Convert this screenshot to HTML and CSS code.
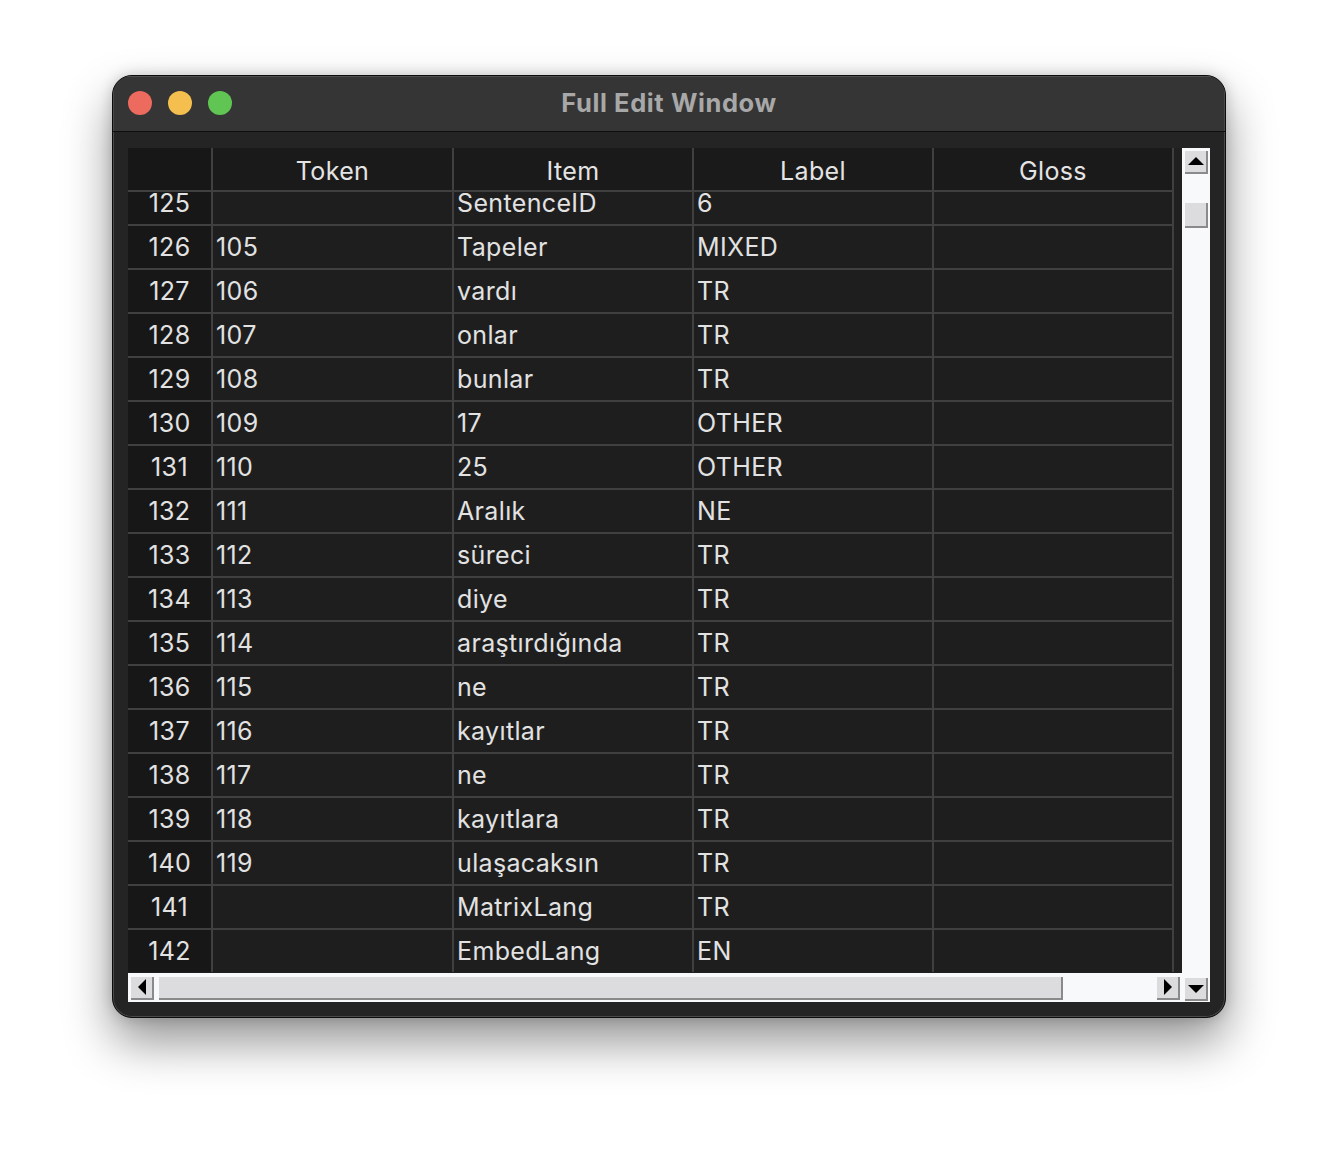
FILE: index.html
```html
<!DOCTYPE html>
<html>
<head>
<meta charset="utf-8">
<link rel="stylesheet" href="styles.css">
</head>
<body>
<div class="window">
  <div class="titlebar">
    <div class="lights">
      <span class="light red"></span>
      <span class="light yellow"></span>
      <span class="light green"></span>
    </div>
    <div class="title">Full Edit Window</div>
  </div>
  <div class="content">
    <div class="tablewrap">
      <div class="grid">
        <div class="h corner"></div>
        <div class="h">Token</div>
        <div class="h">Item</div>
        <div class="h">Label</div>
        <div class="h">Gloss</div>

        <div class="n short">125</div><div class="c short"></div><div class="c short">SentenceID</div><div class="c short">6</div><div class="c short"></div>
        <div class="n">126</div><div class="c">105</div><div class="c">Tapeler</div><div class="c">MIXED</div><div class="c"></div>
        <div class="n">127</div><div class="c">106</div><div class="c">vardı</div><div class="c">TR</div><div class="c"></div>
        <div class="n">128</div><div class="c">107</div><div class="c">onlar</div><div class="c">TR</div><div class="c"></div>
        <div class="n">129</div><div class="c">108</div><div class="c">bunlar</div><div class="c">TR</div><div class="c"></div>
        <div class="n">130</div><div class="c">109</div><div class="c">17</div><div class="c">OTHER</div><div class="c"></div>
        <div class="n">131</div><div class="c">110</div><div class="c">25</div><div class="c">OTHER</div><div class="c"></div>
        <div class="n">132</div><div class="c">111</div><div class="c">Aralık</div><div class="c">NE</div><div class="c"></div>
        <div class="n">133</div><div class="c">112</div><div class="c">süreci</div><div class="c">TR</div><div class="c"></div>
        <div class="n">134</div><div class="c">113</div><div class="c">diye</div><div class="c">TR</div><div class="c"></div>
        <div class="n">135</div><div class="c">114</div><div class="c">araştırdığında</div><div class="c">TR</div><div class="c"></div>
        <div class="n">136</div><div class="c">115</div><div class="c">ne</div><div class="c">TR</div><div class="c"></div>
        <div class="n">137</div><div class="c">116</div><div class="c">kayıtlar</div><div class="c">TR</div><div class="c"></div>
        <div class="n">138</div><div class="c">117</div><div class="c">ne</div><div class="c">TR</div><div class="c"></div>
        <div class="n">139</div><div class="c">118</div><div class="c">kayıtlara</div><div class="c">TR</div><div class="c"></div>
        <div class="n">140</div><div class="c">119</div><div class="c">ulaşacaksın</div><div class="c">TR</div><div class="c"></div>
        <div class="n">141</div><div class="c"></div><div class="c">MatrixLang</div><div class="c">TR</div><div class="c"></div>
        <div class="n">142</div><div class="c"></div><div class="c">EmbedLang</div><div class="c">EN</div><div class="c"></div>
      </div>
    </div>
    <div class="vscroll">
      <div class="btn"><span class="tri up"></span></div>
      <div class="vthumb"></div>
      <div class="vspacer"></div>
      <div class="btn"><span class="tri down"></span></div>
    </div>
    <div class="hscroll">
      <div class="btn"><span class="tri left"></span></div>
      <div class="hthumb"></div>
      <div class="hspacer"></div>
      <div class="btn"><span class="tri right"></span></div>
    </div>
  </div>
</div>
</body>
</html>
```

FILE: styles.css
```css
html, body {
  margin: 0;
  padding: 0;
  background: #ffffff;
}
body {
  width: 1338px;
  height: 1166px;
  font-family: Inter, "Open Sans", "Liberation Sans", sans-serif;
  padding-top: 75px;
  padding-left: 112px;
  box-sizing: border-box;
}
.window {
  width: 1114px;
  height: 943px;
  box-sizing: border-box;
  border: 1px solid #0c0c0c;
  border-radius: 20px;
  background: #242424;
  overflow: hidden;
  box-shadow: 0 24px 48px rgba(0, 0, 0, 0.42), 0 0 14px rgba(0, 0, 0, 0.18), inset 0 0 0 1px #4a4a4a;
  display: flex;
  flex-direction: column;
}
.titlebar {
  height: 56px;
  flex: none;
  background: #353535;
  border-bottom: 1px solid #0e0e0e;
  box-sizing: border-box;
  position: relative;
  display: flex;
  align-items: center;
  justify-content: center;
  box-shadow: inset 0 1px 0 #4f4f4f, inset 1px 0 0 #4a4a4a, inset -1px 0 0 #4a4a4a;
}
.lights {
  position: absolute;
  left: 15px;
  top: 15px;
  display: flex;
  gap: 16px;
}
.light {
  width: 24px;
  height: 24px;
  border-radius: 50%;
  display: block;
}
.red { background: #ed6a5e; }
.yellow { background: #f5bf4f; }
.green { background: #61c554; }
.title {
  color: #a8a8a8;
  font-weight: 700;
  font-size: 25.5px;
  letter-spacing: 0.6px;
  margin-top: -2px;
}
.content {
  flex: 1;
  padding: 16px 15px 15px 15px;
  display: grid;
  grid-template-columns: 1054px 28px;
  grid-template-rows: 825px 29px;
}
.tablewrap {
  grid-column: 1;
  grid-row: 1;
  background: #202020;
  overflow: hidden;
}
.grid {
  width: 1046px;
  display: grid;
  grid-template-columns: 83px 239px 238px 238px 238px;
  grid-auto-rows: 42px;
  grid-template-rows: 42px 32px;
  gap: 2px;
  padding-right: 2px;
  box-sizing: border-box;
  background: #404040;
  color: #e2e2e2;
  font-size: 25px;
  letter-spacing: 0.35px;
}
.h {
  background: #1a1a1a;
  text-align: center;
  line-height: 46px;
  color: #e4e4e4;
}
.corner { background: #171717; }
.n {
  background: #171717;
  text-align: center;
  line-height: 42px;
}
.c {
  background: #1e1e1e;
  padding-left: 3px;
  line-height: 42px;
  white-space: nowrap;
  overflow: hidden;
}
.n.short, .c.short {
  line-height: 22px;
  overflow: visible;
}
.vscroll {
  grid-column: 2;
  grid-row: 1 / span 2;
  background: #f8f9fb;
  display: flex;
  flex-direction: column;
  align-items: center;
  padding: 3px 0 1px 1px;
  box-sizing: border-box;
}
.vthumb {
  width: 23px;
  height: 25px;
  margin-top: 29px;
  box-sizing: border-box;
  background: #dcdcde;
  border-right: 2px solid #8a8a8a;
  border-bottom: 2px solid #8a8a8a;
}
.vspacer { flex: 1; }
.hscroll {
  grid-column: 1;
  grid-row: 2;
  background: #f8f9fb;
  display: flex;
  align-items: center;
  padding: 1px 2px 0 3px;
  box-sizing: border-box;
}
.hthumb {
  width: 904px;
  height: 23px;
  margin-left: 5px;
  box-sizing: border-box;
  background: #dcdcde;
  border-right: 2px solid #8a8a8a;
  border-bottom: 2px solid #8a8a8a;
}
.hspacer { flex: 1; }
.btn {
  width: 23px;
  height: 23px;
  flex: none;
  box-sizing: border-box;
  background: #dcdcde;
  border-right: 2px solid #8a8a8a;
  border-bottom: 2px solid #8a8a8a;
  display: flex;
  align-items: center;
  justify-content: center;
}
.tri {
  width: 0;
  height: 0;
  display: block;
}
.tri.up {
  border-left: 8px solid transparent;
  border-right: 8px solid transparent;
  border-bottom: 8px solid #000;
  margin-top: -2px;
}
.tri.down {
  border-left: 8px solid transparent;
  border-right: 8px solid transparent;
  border-top: 8px solid #000;
}
.tri.left {
  border-top: 8px solid transparent;
  border-bottom: 8px solid transparent;
  border-right: 8px solid #000;
}
.tri.right {
  border-top: 8px solid transparent;
  border-bottom: 8px solid transparent;
  border-left: 8px solid #000;
}
```
